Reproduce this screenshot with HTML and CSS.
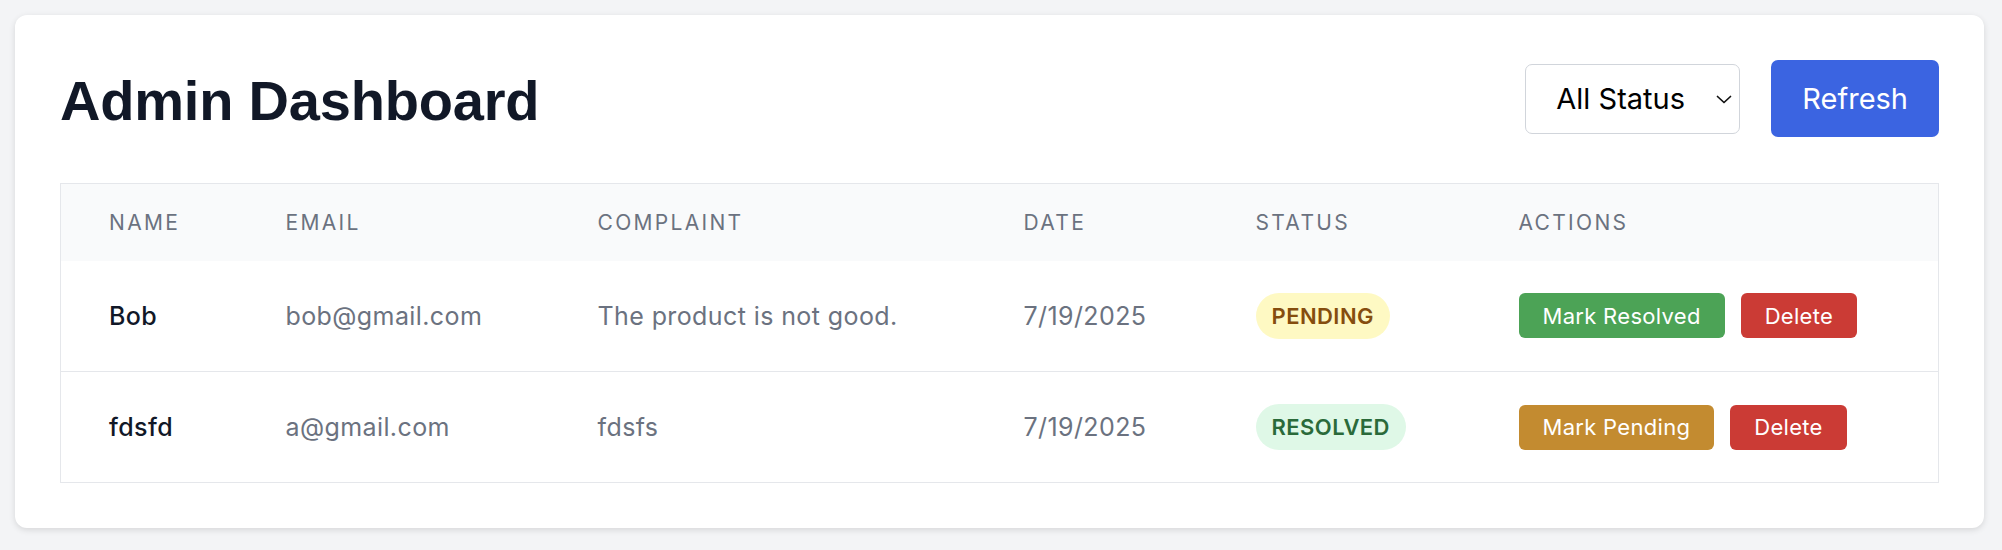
FILE: index.html
```html
<!DOCTYPE html>
<html lang="en">
<head>
<meta charset="utf-8">
<title>Admin Dashboard</title>
<link rel="stylesheet" href="styles.css">
</head>
<body>
<div class="page">
  <main class="card">
    <header class="top">
      <h1 class="title">Admin Dashboard</h1>
      <div class="controls">
        <div class="select-wrap">
          <select class="status-select">
            <option>All Status</option>
            <option>Pending</option>
            <option>Resolved</option>
          </select>
          <svg class="chev" width="16" height="9" viewBox="0 0 16 9" aria-hidden="true"><path d="M1.5 1.5l6.5 6 6.5-6" fill="none" stroke="#111" stroke-width="1.7" stroke-linecap="round" stroke-linejoin="round"/></svg>
        </div>
        <button class="btn-refresh">Refresh</button>
      </div>
    </header>

    <table class="grid">
      <colgroup>
        <col class="c-name"><col class="c-email"><col class="c-complaint"><col class="c-date"><col class="c-status"><col class="c-actions">
      </colgroup>
      <thead>
        <tr>
          <th>Name</th>
          <th>Email</th>
          <th>Complaint</th>
          <th>Date</th>
          <th>Status</th>
          <th>Actions</th>
        </tr>
      </thead>
      <tbody>
        <tr>
          <td class="name">Bob</td>
          <td class="muted">bob@gmail.com</td>
          <td class="muted">The product is not good.</td>
          <td class="muted">7/19/2025</td>
          <td><span class="badge badge-pending">PENDING</span></td>
          <td>
            <div class="actions">
              <button class="btn btn-green">Mark Resolved</button>
              <button class="btn btn-red">Delete</button>
            </div>
          </td>
        </tr>
        <tr>
          <td class="name">fdsfd</td>
          <td class="muted">a@gmail.com</td>
          <td class="muted">fdsfs</td>
          <td class="muted">7/19/2025</td>
          <td><span class="badge badge-resolved">RESOLVED</span></td>
          <td>
            <div class="actions">
              <button class="btn btn-amber">Mark Pending</button>
              <button class="btn btn-red">Delete</button>
            </div>
          </td>
        </tr>
      </tbody>
    </table>
  </main>
</div>
</body>
</html>
```

FILE: styles.css
```css
* { box-sizing: border-box; }

html, body {
  margin: 0;
  background: #f3f4f6;
}

body {
  font-family: Inter, "Noto Sans", "DejaVu Sans", sans-serif;
  color: #111827;
}

.page {
  padding: 15px 18px 22px 15px;
}

.card {
  background: #ffffff;
  border-radius: 12px;
  padding: 45px;
  box-shadow: 0 2px 6px rgba(0, 0, 0, 0.12);
}

.top {
  display: flex;
  align-items: center;
  justify-content: space-between;
  margin-bottom: 46px;
}

.title {
  margin: 0;
  font-family: "Liberation Sans", Arial, sans-serif;
  font-weight: 700;
  font-size: 56px;
  letter-spacing: -0.2px;
  line-height: 1;
  color: #111827;
  padding-top: 4px;
}

.controls {
  display: flex;
  align-items: center;
  gap: 31px;
}

.select-wrap {
  position: relative;
  width: 215px;
  height: 70px;
}

.status-select {
  appearance: none;
  -webkit-appearance: none;
  width: 100%;
  height: 100%;
  border: 1px solid #d1d5db;
  border-radius: 7px;
  background: #ffffff;
  font-family: Inter, "Noto Sans", sans-serif;
  font-size: 29px;
  color: #000000;
  padding: 0 0 0 30px;
  outline: none;
}

.chev {
  position: absolute;
  right: 8px;
  top: 31px;
  pointer-events: none;
}

.btn-refresh {
  height: 77px;
  padding: 0 31px;
  border: none;
  border-radius: 7px;
  background: #3b64e1;
  color: #ffffff;
  font-family: Inter, "Noto Sans", sans-serif;
  font-size: 29px;
  cursor: pointer;
}

.grid {
  width: 100%;
  border-collapse: collapse;
  table-layout: fixed;
  border: 1px solid #e5e7eb;
}

.c-name { width: 177px; }
.c-email { width: 312px; }
.c-complaint { width: 426px; }
.c-date { width: 232px; }
.c-status { width: 263px; }
.c-actions { width: auto; }

.grid thead tr {
  background: #f9fafb;
}

.grid th {
  height: 77px;
  padding: 0 0 0 48px;
  text-align: left;
  font-size: 21px;
  font-weight: 400;
  letter-spacing: 0.11em;
  text-transform: uppercase;
  color: #6b7280;
}

.grid tbody tr {
  border-bottom: 1px solid #e5e7eb;
}

.grid td {
  height: 111px;
  padding: 0 0 0 48px;
  font-size: 25px;
  letter-spacing: 0.4px;
  vertical-align: middle;
  white-space: nowrap;
}

.name {
  color: #111827;
  font-weight: 500;
}

.muted {
  color: #6b7280;
}

.badge {
  display: inline-block;
  height: 46px;
  line-height: 46px;
  padding: 0 16px;
  border-radius: 23px;
  font-size: 22px;
  font-weight: 600;
  letter-spacing: 0.02em;
}

.badge-pending {
  background: #fef9c3;
  color: #854d0e;
}

.badge-resolved {
  background: #dff8e7;
  color: #2a6a3a;
}

.actions {
  display: flex;
  gap: 16px;
}

.btn {
  height: 45px;
  padding: 0 24px;
  border: none;
  border-radius: 6px;
  color: #ffffff;
  font-family: Inter, "Noto Sans", sans-serif;
  font-size: 22px;
  letter-spacing: 0.3px;
  cursor: pointer;
}

.btn-green { background: #4ca356; }
.btn-red { background: #cb3b35; }
.btn-amber { background: #c38b30; }
```
